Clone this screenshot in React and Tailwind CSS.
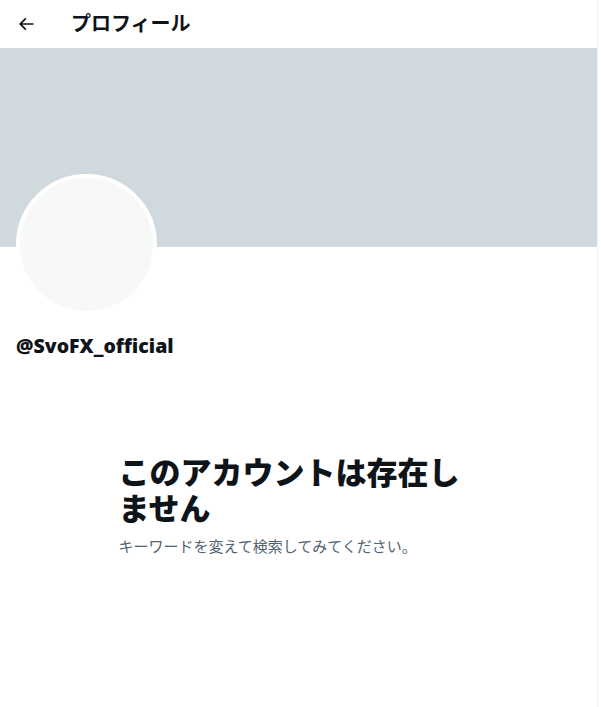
export default function App() {
  return (
    <div className="min-h-screen bg-white">
      <div
        className="w-[598px] min-h-[707px] border-r border-[#eff3f4] bg-white"
        style={{ fontFamily: '"Open Sans", "Noto Sans CJK JP", sans-serif' }}
      >
        <div className="flex h-12 items-center px-4">
          <svg viewBox="0 0 24 24" className="h-5 w-5 text-[#0f1419]" fill="currentColor">
            <path d="M7.414 13l5.043 5.04-1.414 1.42L3.586 12l7.457-7.46 1.414 1.42L7.414 11H21v2H7.414z" />
          </svg>
          <div className="ml-[35px] text-[20px] font-bold leading-6 text-[#0f1419]">プロフィール</div>
        </div>
        <div className="h-[199px] bg-[#cfd9de]" />
        <div className="px-4">
          <div className="-mt-[73px] h-[141px] w-[141px] rounded-full border-4 border-white bg-[#f7f9f9]" />
          <div className="mt-[19px] text-[19.5px] font-extrabold leading-6 text-[#0f1419]">@SvoFX_official</div>
        </div>
        <div className="mx-auto mt-[96px] w-[400px] px-5">
          <div className="text-[31px] font-extrabold leading-9 text-[#0f1419]">
            このアカウントは存在しません
          </div>
          <div className="mt-[10px] text-[15px] leading-5 text-[#536471]">
            キーワードを変えて検索してみてください。
          </div>
        </div>
      </div>
    </div>
  );
}
